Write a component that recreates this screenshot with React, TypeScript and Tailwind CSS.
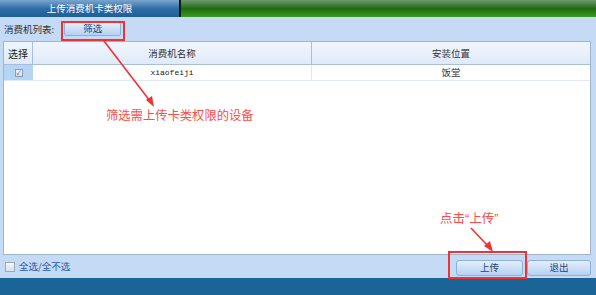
export default function App() {
  const cn = { fontFamily: '"Noto Sans CJK SC", "Noto Sans", sans-serif' };

  return (
    <div className="relative w-[596px] h-[295px] overflow-hidden flex flex-col bg-[#c4daf5] text-[9.5px] text-[#222]" style={cn}>
      {/* title bar */}
      <div className="flex h-[17px] shrink-0">
        <div className="w-[179px] flex items-center justify-center text-white bg-gradient-to-b from-[#7aa6cf] via-[#2f6ea6] to-[#1d5f98] text-[9.5px]">
          上传消费机卡类权限
        </div>
        <div className="w-[2px] bg-[#0d1a12]" />
        <div className="flex-1 bg-gradient-to-b from-[#6d9a6d] via-[#1e6a0e] to-[#3c9a22]" />
      </div>

      {/* toolbar */}
      <div className="h-[24px] shrink-0 flex items-center pl-[4px] gap-[10px]">
        <span className="text-[#333]">消费机列表:</span>
        <button className="w-[57px] h-[14px] flex items-center justify-center rounded-[2px] border border-[#8fb1d8] bg-gradient-to-b from-[#e3eefb] to-[#b6d1f2] text-[#1f3f78] text-[9.5px] leading-none">
          筛选
        </button>
      </div>

      {/* table */}
      <div className="ml-[3px] mr-[5px] h-[214px] shrink-0 bg-white border border-[#a2b4c8] flex flex-col">
        <div className="flex h-[23px] border-b border-[#a8bfd9] bg-gradient-to-b from-[#f1f6fd] to-[#dfeaf8]">
          <div className="w-[29px] flex items-center justify-center border-r border-[#a8bfd9] text-[10px]">选择</div>
          <div className="w-[279px] flex items-center justify-center border-r border-[#a8bfd9] text-[#333]">消费机名称</div>
          <div className="flex-1 flex items-center justify-center text-[#333]">安装位置</div>
        </div>
        <div className="flex h-[16px] border-b border-[#dfe8f4]">
          <div className="w-[29px] flex items-center justify-center bg-[#b5d5f5]">
            <span className="w-[8px] h-[8px] border border-[#8a9db3] bg-gradient-to-b from-[#f4f6f9] to-[#d6dde6] flex items-center justify-center text-[6px] leading-none text-[#3a5478]">✓</span>
          </div>
          <div className="w-[279px] flex items-center justify-center border-r border-[#dfe8f4] text-[8px] text-[#222]" style={{ fontFamily: '"Liberation Mono", monospace' }}>
            xiaofeiji
          </div>
          <div className="flex-1 flex items-center justify-center text-[#333]">饭堂</div>
        </div>
        <div className="flex-1" />
      </div>

      {/* bottom row */}
      <div className="flex-1 flex items-center pl-[5px] pr-[5px]">
        <span className="w-[10px] h-[10px] border border-[#9aaabb] bg-gradient-to-b from-[#f5f7fa] to-[#d9e0e8]" />
        <span className="ml-[4px] text-[#2b57a3]">全选/全不选</span>
        <div className="ml-auto flex gap-[4px] pt-[2px]">
          <button className="w-[67px] h-[16px] flex items-center justify-center rounded-[3px] border border-[#8fb1d8] bg-gradient-to-b from-[#e3eefb] to-[#b6d1f2] text-[#1f3f78] text-[9.5px] leading-none">
            上传
          </button>
          <button className="w-[64px] h-[16px] flex items-center justify-center rounded-[3px] border border-[#8fb1d8] bg-gradient-to-b from-[#e3eefb] to-[#b6d1f2] text-[#1f3f78] text-[9.5px] leading-none">
            退出
          </button>
        </div>
      </div>

      {/* bottom strip */}
      <div className="h-[17px] shrink-0 bg-[#1a6497]" />

      {/* annotations */}
      <div className="absolute left-[61px] top-[21px] w-[64px] h-[20px] border-2 border-[#ee3333]" />
      <div className="absolute left-[448px] top-[251px] w-[79px] h-[28px] border-2 border-[#ee3333]" />
      <div className="absolute left-[106px] top-[109px] text-[12.3px] leading-none text-[#ff4a4a] whitespace-nowrap">
        筛选需上传卡类权限的设备
      </div>
      <div
        className="absolute left-[440px] top-[213px] text-[12.5px] leading-none text-[#ff4a4a] whitespace-nowrap"
        style={{ fontFamily: '"Liberation Sans", "Noto Sans CJK SC", sans-serif' }}
      >
        点击“上传”
      </div>
      <svg className="absolute left-0 top-0 pointer-events-none" width="596" height="295" viewBox="0 0 596 295">
        <g stroke="#ee3333" strokeWidth="1.6" fill="#ee3333">
          <line x1="104" y1="41" x2="150" y2="101" />
          <polygon points="154,107 146,100 152,96" stroke="none" />
          <line x1="471" y1="228" x2="488" y2="246" />
          <polygon points="493,252 484,246 490,241" stroke="none" />
        </g>
      </svg>
    </div>
  );
}
